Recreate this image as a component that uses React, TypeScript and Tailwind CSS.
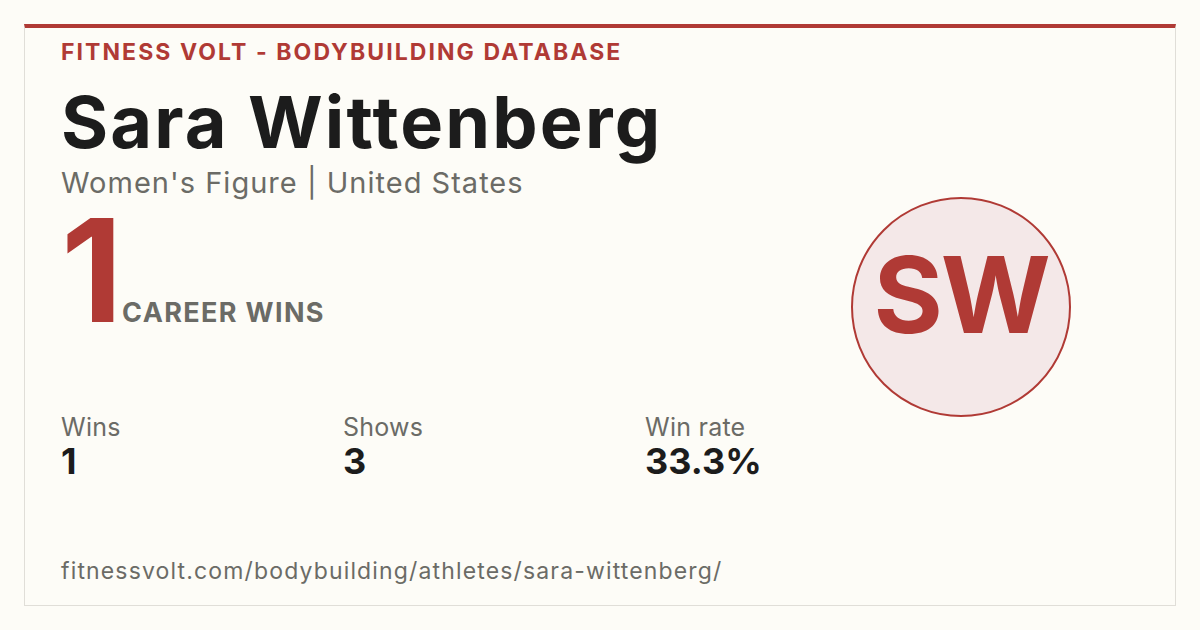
const stats = [
  { label: "Wins", value: "1", width: "w-[282px]" },
  { label: "Shows", value: "3", width: "w-[302px]" },
  { label: "Win rate", value: "33.3%", width: "w-[200px]" },
];

export default function App() {
  return (
    <div className="w-[1200px] h-[630px] bg-[#fdfcf7] p-6 font-['Inter',sans-serif]">
      <div className="h-full border border-[#e0ded8] border-t-4 border-t-[#b03a35] flex pl-9 pr-[104px]">
        {/* Left column */}
        <div className="flex-1 flex flex-col pt-[12px]">
          <div className="text-[23px] leading-6 font-bold tracking-[0.09em] text-[#b03a35]">
            FITNESS VOLT - BODYBUILDING DATABASE
          </div>
          <h1 className="mt-[22px] text-[72px] leading-[72px] font-bold tracking-[0.03em] text-[#1c1c1c]">
            Sara Wittenberg
          </h1>
          <div className="mt-[7px] text-[29px] leading-9 tracking-[0.035em] text-[#6b6b66]">
            Women's Figure | United States
          </div>

          <div className="flex items-baseline -mt-[1px]">
            <span className="text-[143px] leading-[140px] font-bold text-[#b03a35] tracking-[-0.06em]">1</span>
            <span className="ml-[8px] text-[27px] font-bold tracking-[0.05em] text-[#6b6b66]">CAREER WINS</span>
          </div>

          <div className="flex mt-[72px]">
            {stats.map((s) => (
              <div key={s.label} className={s.width}>
                <div className="text-[25px] leading-[30px] tracking-[0.01em] text-[#6b6b66]">{s.label}</div>
                <div className="text-[36px] leading-[38px] font-bold text-[#1c1c1c]">{s.value}</div>
              </div>
            ))}
          </div>

          <div className="mt-auto mb-[20px] text-[23px] leading-7 tracking-[0.05em] text-[#6b6b66]">
            fitnessvolt.com/bodybuilding/athletes/sara-wittenberg/
          </div>
        </div>

        {/* Initials badge */}
        <div className="pt-[169px]">
          <div className="w-[220px] h-[220px] rounded-full bg-[#f4e8e8] border-2 border-[#b03a35] flex items-center justify-center pb-[24px]">
            <span className="text-[106px] font-bold text-[#b03a35] leading-none tracking-[-0.02em]">SW</span>
          </div>
        </div>
      </div>
    </div>
  );
}
